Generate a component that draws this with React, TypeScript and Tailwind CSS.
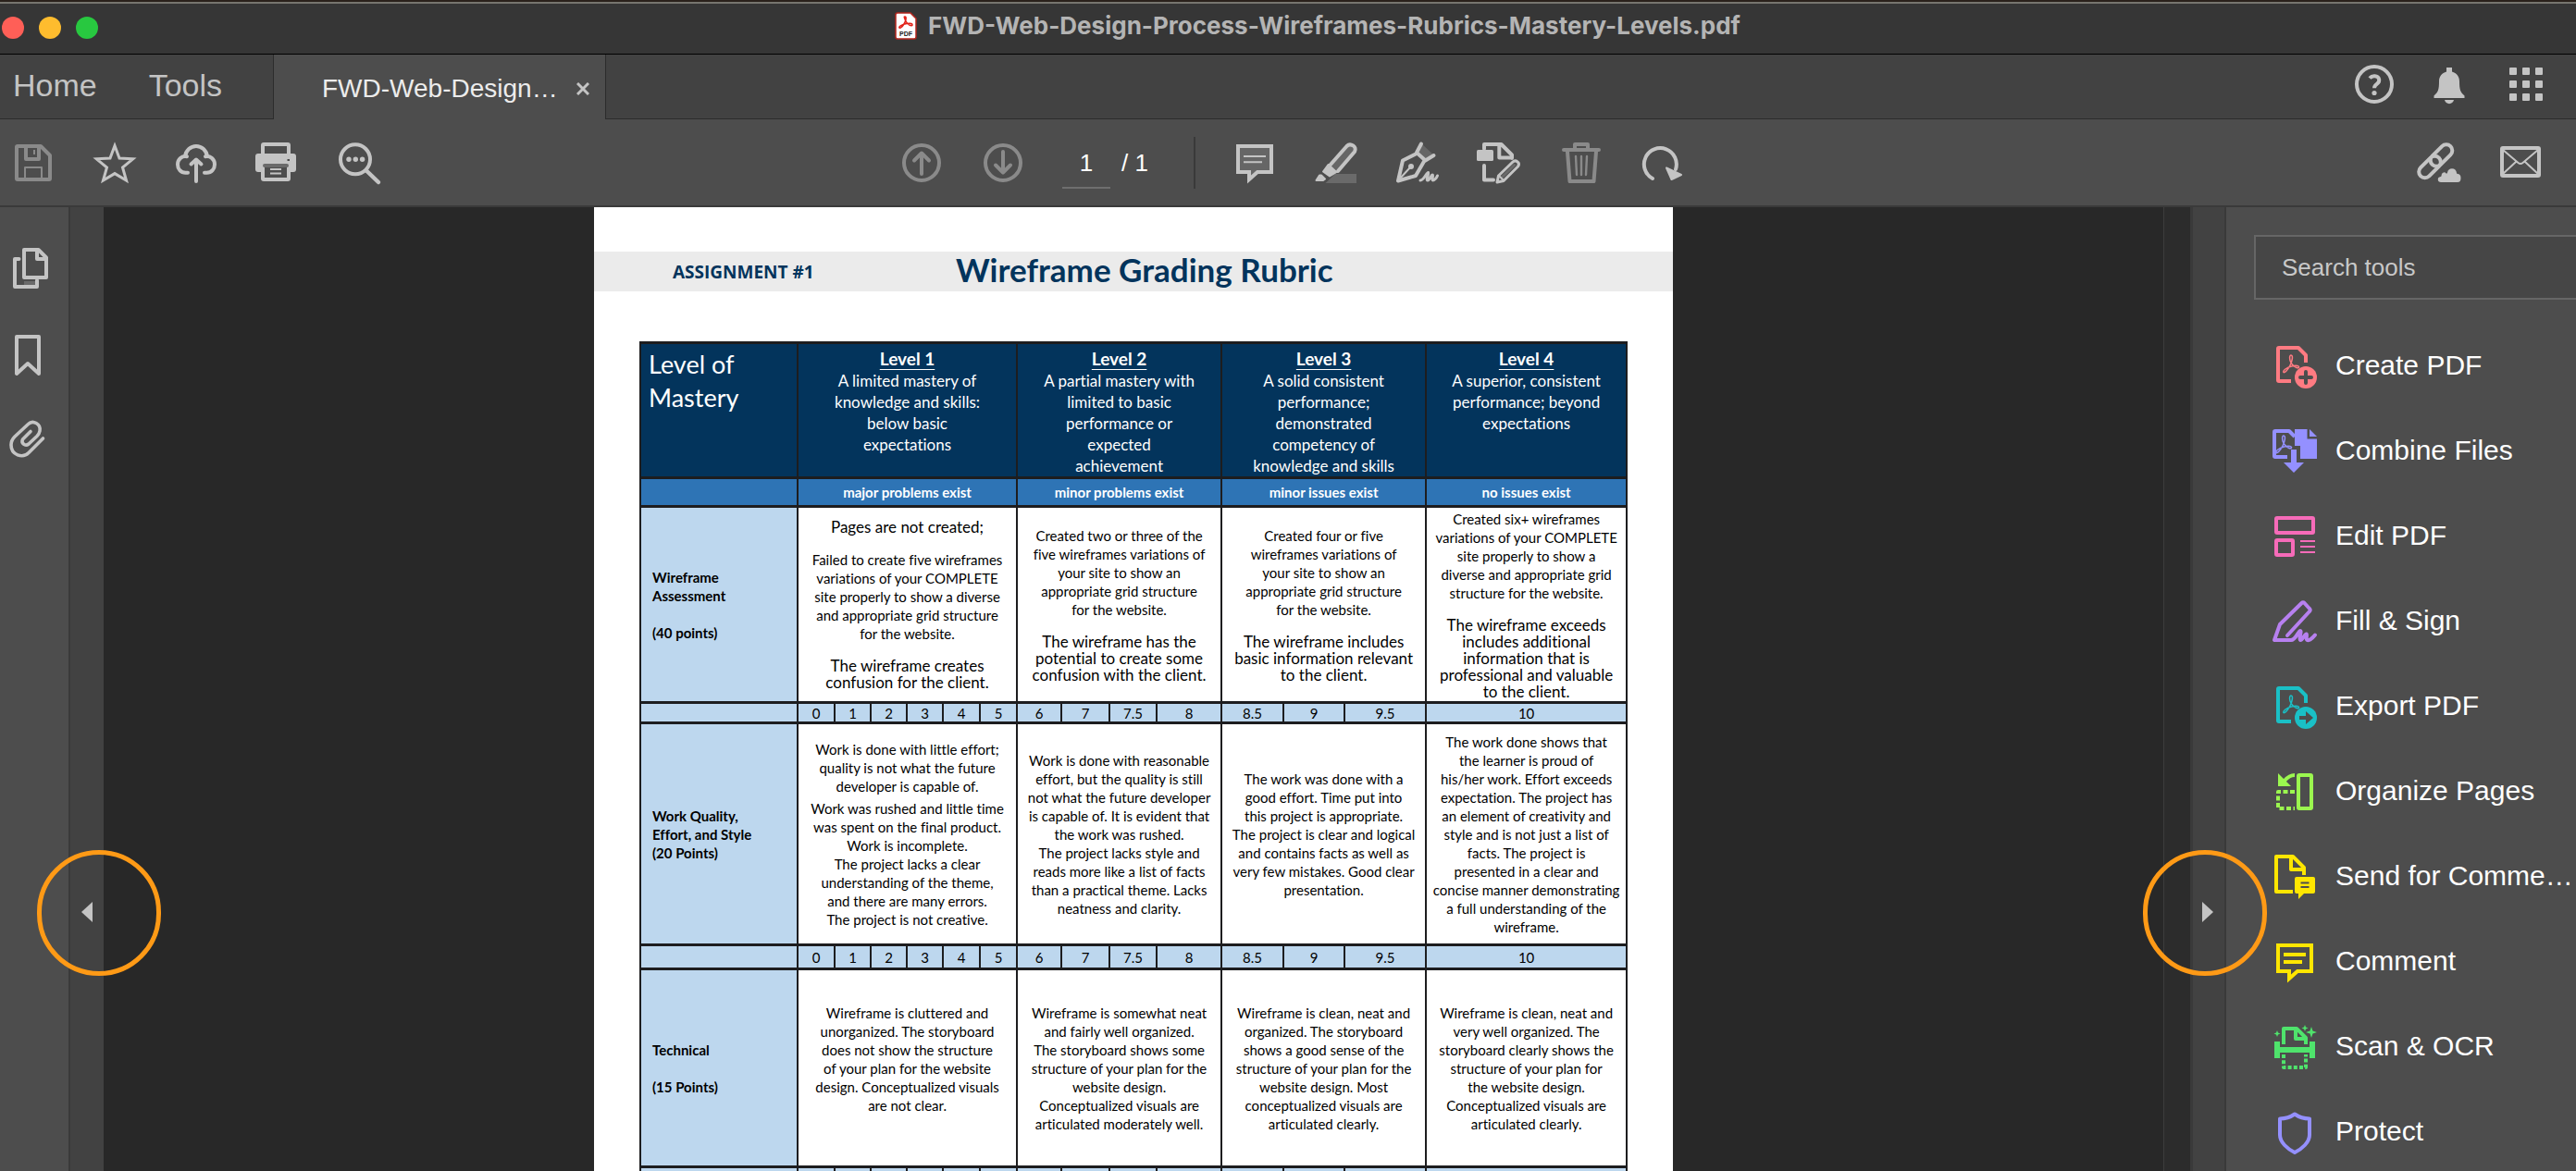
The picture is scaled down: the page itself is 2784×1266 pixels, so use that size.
import type { ReactNode } from "react";
import clsx from "clsx";

const DARK = "#4d4d4d";

function Icon({ children }: { children: ReactNode }) {
  return (
    <svg
      viewBox="0 0 48 48"
      className="w-12 h-12 shrink-0 overflow-visible"
      fill="none"
      stroke="currentColor"
      strokeWidth={4}
      strokeLinecap="round"
      strokeLinejoin="round"
      aria-hidden
    >
      {children}
    </svg>
  );
}

function IconButton({ label, muted, children }: { label: string; muted?: boolean; children: ReactNode }) {
  return (
    <button type="button" aria-label={label} className={clsx("shrink-0", muted ? "text-[#8a8a8a]" : "text-[#c4c4c4]")}>
      <Icon>{children}</Icon>
    </button>
  );
}

/* ---------- title bar ---------- */

function TitleBar() {
  return (
    <header className="h-[59px] shrink-0 bg-[#363636] border-t-2 border-t-[#2a211b] border-b border-b-black shadow-[inset_0_2px_0_#77756f] flex items-center">
      <div className="flex gap-4 pl-0.5 w-32">
        <button type="button" aria-label="Close window" className="w-6 h-6 rounded-full bg-[#ff5f57]" />
        <button type="button" aria-label="Minimize window" className="w-6 h-6 rounded-full bg-[#febc2e]" />
        <button type="button" aria-label="Zoom window" className="w-6 h-6 rounded-full bg-[#28c840]" />
      </div>
      <div className="flex-1 flex items-center justify-center gap-3 pr-16 pb-1">
        <svg viewBox="0 0 24 30" className="w-6 h-[30px]">
          <path d="M3 1h14l6 6v20q0 2-2 2H3q-2 0-2-2V3q0-2 2-2z" fill="#fff" stroke="#b3261e" strokeWidth="1.5" />
          <path
            d="M11 5c2 0 1 5-1 8s-4 5-5 4 3-4 8-4.5 6 0 6 1.500-5 .5-7-4-2-5-1-5z"
            fill="none"
            stroke="#e2231a"
            strokeWidth="1.600"
          />
          <text x="12" y="26" textAnchor="middle" fontSize="7" fontWeight="700" fill="#222" fontFamily="Liberation Sans, sans-serif">
            PDF
          </text>
        </svg>
        <h1 className="font-['Inter',sans-serif] font-bold text-[26px] leading-8 text-[#b4b4b4] whitespace-nowrap">
          FWD-Web-Design-Process-Wireframes-Rubrics-Mastery-Levels.pdf
        </h1>
      </div>
    </header>
  );
}

/* ---------- tabs ---------- */

function TabBar() {
  return (
    <nav className="h-[70px] shrink-0 bg-[#424242] flex items-stretch">
      <div className="w-[295px] shrink-0 border-b border-[#2c2c2c] flex items-center gap-14 pl-3.5 pb-1 text-[34px] leading-10 text-[#c4c4c4]">
        <a href="#home">Home</a>
        <a href="#tools">Tools</a>
      </div>
      <div className="w-[360px] shrink-0 bg-[#4d4d4d] border-x border-[#2c2c2c] flex items-center gap-5 pl-[52px] pt-1">
        <a href="#document" className="text-[28px] leading-8 text-[#ececec] whitespace-nowrap">
          FWD-Web-Design…
        </a>
        <button type="button" aria-label="Close tab" className="text-[#c4c4c4]">
          <svg viewBox="0 0 14 14" className="w-3.5 h-3.5" stroke="currentColor" strokeWidth="3">
            <path d="M1 1l12 12M13 1L1 13" />
          </svg>
        </button>
      </div>
      <div className="flex-1 border-b border-[#2c2c2c] flex items-center justify-end gap-[34px] pr-[30px] pb-1.5">
        <IconButton label="Help">
          <circle cx="24" cy="24" r="19" />
          <path d="M19 17.500c1.500-1.800 3.500-2.500 5.500-2.300 5.500.500 6 6 2.500 8.500-2 1.500-3 2.300-3 4.500" strokeLinecap="butt" />
          <circle cx="24" cy="33.500" r="2.600" fill="currentColor" stroke="none" />
        </IconButton>
        <IconButton label="Notifications">
          <path
            d="M20 6h6v4.500c5 1.500 8 5 8 10.500 0 9 1 11.500 5.500 15.500v2.500h-33v-2.500C11 32.500 12 30 12 21c0-5.500 3-9 8-10.500z"
            fill="currentColor"
            stroke="none"
          />
          <path d="M18 41h10c-1 5.500-9 5.500-10 0z" fill="currentColor" stroke="none" />
        </IconButton>
        <IconButton label="Apps">
          {[6, 20, 34].map((y) =>
            [6, 20, 34].map((x) => (
              <rect key={`${x}-${y}`} x={x} y={y} width="8" height="8" rx="1" fill="currentColor" stroke="none" />
            ))
          )}
        </IconButton>
      </div>
    </nav>
  );
}

/* ---------- toolbar ---------- */

function Toolbar() {
  return (
    <div className="h-[95px] shrink-0 bg-[#4d4d4d] border-b-2 border-[#3a3a3a] flex items-center">
      <div className="flex-1 flex gap-10 pl-3">
        <IconButton label="Save" muted>
          <path d="M6 7q0-1 1-1h25l10 10v25q0 1-1 1H7q-1 0-1-1z" />
          <path d="M16 7v13h14V7" strokeLinecap="butt" />
          <path d="M25 10v5M15 41V29h18v12" strokeWidth="2" strokeLinecap="butt" />
        </IconButton>
        <IconButton label="Add to starred">
          <path
            d="M24 5.500l5 13.500 14.700.800-11.200 9.200 4 14L24 35.600 11.500 43l4-14L4.300 19.800 19 19z"
            strokeWidth="3"
            strokeLinejoin="miter"
          />
        </IconButton>
        <IconButton label="Upload to cloud">
          <path d="M15 34.700h-2.500c-5 0-8.500-4-8.500-9 0-6 5-9.500 10-8.500" />
          <path d="M12 17c1-6.500 6-11 12-11s11 4.500 12 11" />
          <path d="M34 17.200c5-1 10 2.500 10 8.500 0 5-3.500 9-8.500 9H33" />
          <path d="M24 44V21M18.500 25.500L24 20.500l5.500 5" />
        </IconButton>
        <IconButton label="Print">
          <path d="M8 16V5q0-1 1-1h26q1 0 1 1v11" />
          <rect x="0" y="14" width="44" height="20" rx="3" fill="currentColor" stroke="none" />
          <rect x="8" y="26" width="28" height="16" rx="1" fill={DARK} />
          <path d="M10 27h24" stroke="#6a6a6a" />
          <path d="M16 31h12M16 35.500h12" strokeWidth="2" strokeLinecap="butt" />
          <rect x="34.500" y="20" width="2.500" height="2" fill={DARK} stroke="none" />
        </IconButton>
        <IconButton label="Find text">
          <circle cx="20" cy="20.300" r="16" />
          <g fill="currentColor" stroke="none">
            <circle cx="13" cy="20.300" r="2.700" />
            <circle cx="20.300" cy="20.300" r="2.700" />
            <circle cx="27.600" cy="20.300" r="2.700" />
          </g>
          <path d="M32.500 33L45 45" strokeWidth="4.500" />
        </IconButton>
      </div>

      <div className="flex items-center pl-8">
        <div className="flex gap-10">
          <IconButton label="Previous page" muted>
            <circle cx="24" cy="24" r="19" />
            <path d="M24 36V14M16 21.500l8-8 8 8" />
          </IconButton>
          <IconButton label="Next page" muted>
            <circle cx="24" cy="24" r="19" />
            <path d="M24 12v22M16 26.500l8 8 8-8" />
          </IconButton>
        </div>
        <input
          aria-label="Page number"
          defaultValue="1"
          className="w-[52px] h-14 ml-10 border-b-2 border-[#6e6e6e] bg-transparent pt-1 text-center text-[26px] text-white"
        />
        <span className="w-[90px] pl-3 text-[26px] leading-8 text-white">/ 1</span>
        <span className="w-0.5 h-14 bg-[#3a3a3a]" />
        <div className="flex gap-10 pl-10">
          <IconButton label="Add comment">
            <path d="M6 6h36v28H27L18 42v-8H6z" fill="#666" strokeLinejoin="miter" />
            <path d="M12 17h24M12 23.300h20" strokeWidth="2" strokeLinecap="butt" />
          </IconButton>
          <IconButton label="Highlight text">
            <path d="M23 36h23v10H12.500z" fill="#6a6a6a" stroke="none" />
            <path d="M17 27L35.500 6c4-4 11.500.500 8.500 6L26 33" fill="#666" />
            <path d="M10 33.500l5.500-7.500 9 8-7.500 4.500z" fill="currentColor" strokeWidth="2" />
            <path d="M2.500 43l3.500-5.500h2l4 4-2 1.500z" fill="currentColor" strokeWidth="2" />
          </IconButton>
          <IconButton label="Sign">
            <path d="M28 3l14 13-9 6-10-9z" fill="#666" stroke="none" />
            <path d="M28 3.500l-5 9.500 9.500 8.500 9-5.500" />
            <path d="M22 14.500L8 21.500 3 43.500 22 38l9-15.500" />
            <circle cx="17" cy="28" r="3" fill="currentColor" stroke="none" />
            <path d="M17 28L4 42" strokeWidth="2" />
            <path d="M27 43c4 0 7-9 8.500-8.500s-3 8.500-.500 8.500 3.500-6 5-6-1 6 .500 6 4-2.500 5-5" strokeWidth="3" />
          </IconButton>
          <IconButton label="Edit page">
            <rect x="0" y="10" width="18" height="12" rx="1.500" fill="currentColor" stroke="none" />
            <path d="M8 9V4h18.500L38 15.500V19M24.300 5v13.500H37M8 27v15.500h10" />
            <path d="M22 45l1.500-7L39 23c3-3 8.500 1 5.500 5L29 43.500z" strokeWidth="3" />
            <path d="M28 39l12.500-12.500" stroke="#6a6a6a" strokeWidth="3" />
            <path d="M24 38l5 5" strokeWidth="2" />
          </IconButton>
          <IconButton label="Delete" muted>
            <path d="M6 10h38M18 9V4h14v5M10 12l2.500 32h26L41 12" />
            <path d="M19 17l1 20M25 17v20M31 17l-1 20" strokeWidth="2.400" />
          </IconButton>
          <IconButton label="Rotate">
            <path d="M14 41A17.500 17.500 0 1 1 39 31" />
            <path d="M29 29.500l16 7.500-10.500 5z" fill="currentColor" strokeWidth="2" />
          </IconButton>
        </div>
      </div>

      <div className="flex-1 flex justify-end gap-10 pr-9">
        <IconButton label="Share link">
          <rect x="12.500" y="9.500" width="28" height="13" rx="6.500" transform="rotate(-45 26.500 16)" />
          <rect x="0" y="22" width="28" height="13" rx="6.500" transform="rotate(-45 14 28.500)" />
          <path
            d="M26 46c-5 0-6-7-.500-8 0-5 5.500-5.500 6.500-3.500 1-7 11-7.500 12 .500 6 0 6 11 0 11z"
            fill="currentColor"
            stroke={DARK}
            strokeWidth="2"
          />
        </IconButton>
        <IconButton label="Send by email">
          <rect x="4" y="8" width="40" height="30" rx="1" />
          <path d="M5 10l16.500 14q2.500 2 5 0L43 10M5 36l14-13M43 36L29 23" strokeWidth="2" />
        </IconButton>
      </div>
    </div>
  );
}

/* ---------- left rail ---------- */

function LeftRail() {
  return (
    <aside className="w-[76px] shrink-0 bg-[#4d4d4d] border-r-2 border-[#3a3a3a] flex flex-col gap-[46px] pt-[42px] pl-2">
      <IconButton label="Page thumbnails">
        <path d="M18 42h14v-4H18z" fill="#6a6a6a" stroke="none" />
        <path d="M18 4h15.500L42 12.500V34H18zM32 5v9h9M12.500 14H8v30h24v-7" />
      </IconButton>
      <IconButton label="Bookmarks">
        <path d="M10 4h24v40L22 33 10 44z" />
      </IconButton>
      <IconButton label="Attachments">
        <path
          d="M38.500 20L23 35.500C16.500 42 4 38 4 27c0-3.500 1.500-6.500 4-9L22.500 4.500c5-5 14 0 12.500 7.500-.500 2.500-1.500 4-3 5.500L23 26c-4 3-8.500-1-6.500-5L25 12.500"
          strokeWidth="3.600"
        />
      </IconButton>
    </aside>
  );
}

/* Thin strip that collapses a side pane, ringed by a callout */
function CollapseStrip({ side }: { side: "left" | "right" }) {
  const left = side === "left";
  return (
    <div
      className={clsx(
        "shrink-0 bg-[#424242] flex flex-col pt-[751px]",
        left ? "w-9 items-end pr-3" : "w-[34px] items-start pl-2.5"
      )}
    >
      <div className="relative">
        <button type="button" aria-label={`Toggle ${side} pane`} className="block text-[#c4c4c4]">
          <svg viewBox="0 0 12 22" className="w-3 h-[22px]" fill="currentColor">
            <path d={left ? "M12 0v22L0 11z" : "M0 0v22l12-11z"} />
          </svg>
        </button>
        <span
          className={clsx(
            "absolute z-10 -top-14 w-[134px] h-[136px] rounded-full border-5 border-[#ff9a16] pointer-events-none",
            left ? "-left-12" : "-left-16"
          )}
        />
      </div>
    </div>
  );
}

/* ---------- document ---------- */

const levels = [
  { name: "Level 1", lines: ["A limited mastery of", "knowledge and skills:", "below basic", "expectations"], note: "major problems exist", span: 6 },
  {
    name: "Level 2",
    lines: ["A partial mastery with", "limited to basic", "performance or", "expected", "achievement"],
    note: "minor problems exist",
    span: 4,
  },
  {
    name: "Level 3",
    lines: ["A solid consistent", "performance;", "demonstrated", "competency of", "knowledge and skills"],
    note: "minor issues exist",
    span: 3,
  },
  { name: "Level 4", lines: ["A superior, consistent", "performance; beyond", "expectations"], note: "no issues exist", span: 1 },
];

const scores = ["0", "1", "2", "3", "4", "5", "6", "7", "7.5", "8", "8.5", "9", "9.5", "10"];

type Block = { wide?: boolean; gap?: string; lines: string[] };

type Criterion = { title: string[]; height: string; scoreHeight: string; scored: boolean; cells: Block[][] };

const criteria: Criterion[] = [
  {
    title: ["Wireframe", "Assessment", "", "(40 points)"],
    height: "h-[212px]",
    scoreHeight: "h-[22px]",
    scored: true,
    cells: [
      [
        { wide: true, lines: ["Pages are not created;"] },
        {
          gap: "mt-4",
          lines: [
            "Failed to create five wireframes",
            "variations of your COMPLETE",
            "site properly to show a diverse",
            "and appropriate grid structure",
            "for the website.",
          ],
        },
        { wide: true, gap: "mt-4", lines: ["The wireframe creates", "confusion for the client."] },
      ],
      [
        {
          lines: [
            "Created two or three of the",
            "five wireframes variations of",
            "your site to show an",
            "appropriate grid structure",
            "for the website.",
          ],
        },
        { wide: true, gap: "mt-4", lines: ["The wireframe has the", "potential to create some", "confusion with the client."] },
      ],
      [
        {
          lines: [
            "Created four or five",
            "wireframes variations of",
            "your site to show an",
            "appropriate grid structure",
            "for the website.",
          ],
        },
        { wide: true, gap: "mt-4", lines: ["The wireframe includes", "basic information relevant", "to the client."] },
      ],
      [
        {
          lines: [
            "Created six+ wireframes",
            "variations of your COMPLETE",
            "site properly to show a",
            "diverse and appropriate grid",
            "structure for the website.",
          ],
        },
        {
          wide: true,
          gap: "mt-4",
          lines: ["The wireframe exceeds", "includes additional", "information that is", "professional and valuable", "to the client."],
        },
      ],
    ],
  },
  {
    title: ["Work Quality,", "Effort, and Style", "(20 Points)"],
    height: "h-[240px]",
    scoreHeight: "h-[26px]",
    scored: true,
    cells: [
      [
        { lines: ["Work is done with little effort;", "quality is not what the future", "developer is capable of."] },
        {
          gap: "mt-1",
          lines: [
            "Work was rushed and little time",
            "was spent on the final product.",
            "Work is incomplete.",
            "The project lacks a clear",
            "understanding of the theme,",
            "and there are many errors.",
            "The project is not creative.",
          ],
        },
      ],
      [
        {
          lines: [
            "Work is done with reasonable",
            "effort, but the quality is still",
            "not what the future developer",
            "is capable of. It is evident that",
            "the work was rushed.",
            "The project lacks style and",
            "reads more like a list of facts",
            "than a practical theme. Lacks",
            "neatness and clarity.",
          ],
        },
      ],
      [
        {
          lines: [
            "The work was done with a",
            "good effort. Time put into",
            "this project is appropriate.",
            "The project is clear and logical",
            "and contains facts as well as",
            "very few mistakes. Good clear",
            "presentation.",
          ],
        },
      ],
      [
        {
          lines: [
            "The work done shows that",
            "the learner is proud of",
            "his/her work. Effort exceeds",
            "expectation. The project has",
            "an element of creativity and",
            "style and is not just a list of",
            "facts. The project is",
            "presented in a clear and",
            "concise manner demonstrating",
            "a full understanding of the",
            "wireframe.",
          ],
        },
      ],
    ],
  },
  {
    title: ["Technical", "", "(15 Points)"],
    height: "h-[214px]",
    scoreHeight: "h-[22px]",
    scored: false,
    cells: [
      [
        {
          lines: [
            "Wireframe is cluttered and",
            "unorganized. The storyboard",
            "does not show the structure",
            "of your plan for the website",
            "design. Conceptualized visuals",
            "are not clear.",
            "",
          ],
        },
      ],
      [
        {
          lines: [
            "Wireframe is somewhat neat",
            "and fairly well organized.",
            "The storyboard shows some",
            "structure of your plan for the",
            "website design.",
            "Conceptualized visuals are",
            "articulated moderately well.",
          ],
        },
      ],
      [
        {
          lines: [
            "Wireframe is clean, neat and",
            "organized. The storyboard",
            "shows a good sense of the",
            "structure of your plan for the",
            "website design. Most",
            "conceptualized visuals are",
            "articulated clearly.",
          ],
        },
      ],
      [
        {
          lines: [
            "Wireframe is clean, neat and",
            "very well organized. The",
            "storyboard clearly shows the",
            "structure of your plan for",
            "the website design.",
            "Conceptualized visuals are",
            "articulated clearly.",
          ],
        },
      ],
    ],
  },
];

const cell = "border-x-2 border-y-3 border-[#1d1d1f] p-0";

function Lines({ lines }: { lines: string[] }) {
  return (
    <>
      {lines.map((line, i) => (
        <span key={i} className="block whitespace-nowrap">
          {line || "\u00a0"}
        </span>
      ))}
    </>
  );
}

function ScoreRow({ height, scored }: { height: string; scored: boolean }) {
  return (
    <tr className={clsx(height, "bg-[#bdd7ee] text-center text-[15px] leading-[18px]")}>
      <td className={cell} />
      {scores.map((s) => (
        <td key={s} className={cell}>
          {scored && s}
        </td>
      ))}
    </tr>
  );
}

function Rubric() {
  return (
    <table className="w-[1067px] table-fixed border-collapse text-black">
      <colgroup>
        <col className="w-[170px]" />
        <col className="w-10" />
        <col className="w-[39px]" />
        <col className="w-[39px]" />
        <col className="w-[39px]" />
        <col className="w-10" />
        <col className="w-10" />
        <col className="w-12" />
        <col className="w-[52px]" />
        <col className="w-[51px]" />
        <col className="w-[70px]" />
        <col className="w-[67px]" />
        <col className="w-[66px]" />
        <col className="w-[88px]" />
        <col className="w-[217px]" />
      </colgroup>
      <thead>
        <tr className="h-[146px] bg-[#03345c] text-white align-top">
          <th scope="col" className={clsx(cell, "pl-2 pt-1 text-left font-normal text-[27px] leading-9")}>
            <Lines lines={["Level of", "Mastery"]} />
          </th>
          {levels.map((l) => (
            <th key={l.name} scope="col" colSpan={l.span} className={clsx(cell, "pt-1 font-normal text-[17px] leading-[23px]")}>
              <span className="font-bold text-[19px] underline underline-offset-4">{l.name}</span>
              <Lines lines={l.lines} />
            </th>
          ))}
        </tr>
        <tr className="h-[31px] bg-[#2e74b5] text-white text-[15px] leading-5">
          <td className={cell} />
          {levels.map((l) => (
            <th key={l.name} scope="col" colSpan={l.span} className={clsx(cell, "font-bold")}>
              {l.note}
            </th>
          ))}
        </tr>
      </thead>
      {criteria.map((c) => (
        <tbody key={c.title[0]}>
          <tr className={c.height}>
            <th scope="row" className={clsx(cell, "bg-[#bdd7ee] pl-3 text-left font-bold text-[15px] leading-5")}>
              <Lines lines={c.title} />
            </th>
            {c.cells.map((blocks, i) => (
              <td key={levels[i].name} colSpan={levels[i].span} className={clsx(cell, "text-center")}>
                {blocks.map((b, j) => (
                  <p key={j} className={clsx(b.wide ? "text-[17px] leading-[18px]" : "text-[15px] leading-5", b.gap)}>
                    <Lines lines={b.lines} />
                  </p>
                ))}
              </td>
            ))}
          </tr>
          <ScoreRow height={c.scoreHeight} scored={c.scored} />
        </tbody>
      ))}
    </table>
  );
}

function DocumentView() {
  return (
    <main className="flex-1 min-w-0 bg-[#282828] overflow-hidden flex justify-center items-start">
      <article className="w-[1166px] shrink-0 bg-white pt-12 font-['Lato',sans-serif] [font-variant-ligatures:none]">
        <div className="h-[43px] bg-[#ebebeb] flex items-center text-[#03345c] font-bold">
          <p className="w-[306px] pl-[85px] text-[19px] leading-6 font-['Open_Sans',sans-serif] whitespace-nowrap">ASSIGNMENT #1</p>
          <h2 className="pl-[85px] pb-1.5 text-[35px] leading-9 whitespace-nowrap">Wireframe Grading Rubric</h2>
        </div>
        <div className="pt-[54px] pl-[49px]">
          <Rubric />
        </div>
      </article>
    </main>
  );
}

/* ---------- tools panel ---------- */

function AcrobatMark({ x, y }: { x: number; y: number }) {
  return (
    <path
      transform={`translate(${x} ${y})`}
      d="M-.500-9c2.500 0 1.500 6-1 11s-6 8.500-7 7.500C-9.500 8-6 4.500 0 3s8.500 0 8 1.200S3 4.500 0 0-2-9-.500-9z"
      strokeWidth="1.500"
    />
  );
}

const tools = [
  {
    name: "Create PDF",
    color: "text-[#ff7b82]",
    icon: (
      <>
        <path d="M20 41H7q-1 0-1-1V6q0-1 1-1h21l8 8v8" strokeLinecap="butt" />
        <AcrobatMark x={20.5} y={22} />
        <circle cx="36" cy="37" r="12" fill="currentColor" stroke="none" />
        <path d="M36 31v12M30 37h12" stroke={DARK} />
      </>
    ),
  },
  {
    name: "Combine Files",
    color: "text-[#9490ff]",
    icon: (
      <>
        <path d="M16 31H3q-1 0-1-1V4q0-1 1-1h15l6 6" strokeLinecap="butt" />
        <AcrobatMark x={12.5} y={17} />
        <path d="M24 1h13.500v10.500H48V33H30V19h-6zM40 1l8 8h-8z" fill="currentColor" stroke="none" />
        <path d="M20 23h6v14h8L23 48 12 37h8z" fill="currentColor" stroke="none" />
      </>
    ),
  },
  {
    name: "Edit PDF",
    color: "text-[#f66bb9]",
    icon: (
      <>
        <rect x="4" y="5" width="40" height="16" rx="1" />
        <rect x="4" y="29" width="18" height="16" rx="1" />
        <path d="M30 30h16M30 36h16M30 42h16" strokeWidth="2" strokeLinecap="butt" />
      </>
    ),
  },
  {
    name: "Fill & Sign",
    color: "text-[#b780f0]",
    icon: (
      <path d="M16 40l24-26q1.500-1.500 0-3l-5.500-6q-1.500-1.500-3 0L8 28 2 45h18c5 0 8-10 10-10s-2 9 0 10 5-7 6.500-6.500-1 5.500 1 6.500 6-2.500 8.500-5.500" />
    ),
  },
  {
    name: "Export PDF",
    color: "text-[#1ac0c6]",
    icon: (
      <>
        <path d="M20 41H7q-1 0-1-1V6q0-1 1-1h21l8 8v8" strokeLinecap="butt" />
        <AcrobatMark x={20.5} y={22} />
        <circle cx="36" cy="37" r="12" fill="currentColor" stroke="none" />
        <path d="M29 35h7v-5l8 7-8 7v-5h-7z" fill={DARK} stroke="none" />
      </>
    ),
  },
  {
    name: "Organize Pages",
    color: "text-[#9bf74f]",
    icon: (
      <>
        <rect x="28" y="7" width="14" height="36" rx="1" />
        <path d="M24 25H6v18h18" strokeDasharray="5 2.500" strokeLinecap="butt" />
        <path d="M24 7c-5 0-8 2.500-11 6" strokeLinecap="butt" />
        <path d="M6 5v14h14z" fill="currentColor" stroke="none" />
      </>
    ),
  },
  {
    name: "Send for Comme…",
    color: "text-[#ffe600]",
    icon: (
      <>
        <path d="M22 41H4V3h18l12 12v8M20 4v13h14" strokeLinecap="butt" />
        <path d="M26 25h18q2 0 2 2v14q0 2-2 2H34l-6 6v-6h-2q-2 0-2-2V27q0-2 2-2z" fill="currentColor" stroke="none" />
        <path d="M30.500 31.500h9M30.500 36h9" stroke={DARK} strokeWidth="2" strokeLinecap="butt" />
      </>
    ),
  },
  {
    name: "Comment",
    color: "text-[#ffe600]",
    icon: (
      <>
        <path d="M6 7h36v28H27l-9 8v-8H6z" strokeLinejoin="miter" />
        <path d="M12 17h24M12 25h20" strokeLinecap="butt" />
      </>
    ),
  },
  {
    name: "Scan & OCR",
    color: "text-[#4fe36c]",
    icon: (
      <>
        <path d="M12 22V5h14l10 10v7M25 6v10h10" strokeLinecap="butt" />
        <path d="M5 19v18M43 19v18M5 28h38" strokeWidth="6" strokeLinecap="butt" />
        <path d="M12 33v14h24V33" strokeDasharray="4 2.200" strokeLinecap="butt" />
        <path
          d="M42 3l1.500 4.500L48 9l-4.500 1.500L42 15l-1.500-4.500L36 9l4.500-1.500zM35 1l1 2.500 2.500 1L36 5.500 35 8l-1-2.500-2.500-1 2.500-1zM5 7l1 2.500 2.500 1L6 11.500 5 14l-1-2.500-2.500-1L4 9.500z"
          fill="currentColor"
          stroke="none"
        />
      </>
    ),
  },
  {
    name: "Protect",
    color: "text-[#9490ff]",
    icon: <path d="M24 5.500C19 9 14 10.500 8 10.500V28c0 8 8 15 16 19 8-4 16-11 16-19V10.500c-6 0-11-1.500-16-5z" />,
  },
];

function ToolsPanel() {
  return (
    <aside className="w-[380px] shrink-0 bg-[#4d4d4d] border-l-2 border-[#3a3a3a] pt-[30px] pl-[30px] overflow-hidden">
      <input
        type="search"
        aria-label="Search tools"
        placeholder="Search tools"
        className="block w-[370px] h-[70px] border-2 border-[#666] bg-[#464646] pl-7 text-[26px] text-white placeholder:text-[#c8c8c8]"
      />
      <ul className="pt-[25px] pl-5">
        {tools.map((t) => (
          <li key={t.name}>
            <button type="button" className="h-[92px] flex items-center gap-5 text-left">
              <span className={t.color}>
                <Icon>{t.icon}</Icon>
              </span>
              <span className="text-[30px] leading-9 text-white whitespace-nowrap">{t.name}</span>
            </button>
          </li>
        ))}
      </ul>
    </aside>
  );
}

export default function App() {
  return (
    <div className="h-screen flex flex-col overflow-hidden bg-[#282828] font-['Liberation_Sans',sans-serif]">
      <TitleBar />
      <TabBar />
      <Toolbar />
      <div className="flex-1 min-h-0 flex overflow-hidden">
        <LeftRail />
        <CollapseStrip side="left" />
        <DocumentView />
        <div className="w-8 shrink-0 bg-[#2c2c2c] border-l border-l-[#3d3d3d] border-r-3 border-r-[#3a3a3a]" />
        <CollapseStrip side="right" />
        <ToolsPanel />
      </div>
    </div>
  );
}
